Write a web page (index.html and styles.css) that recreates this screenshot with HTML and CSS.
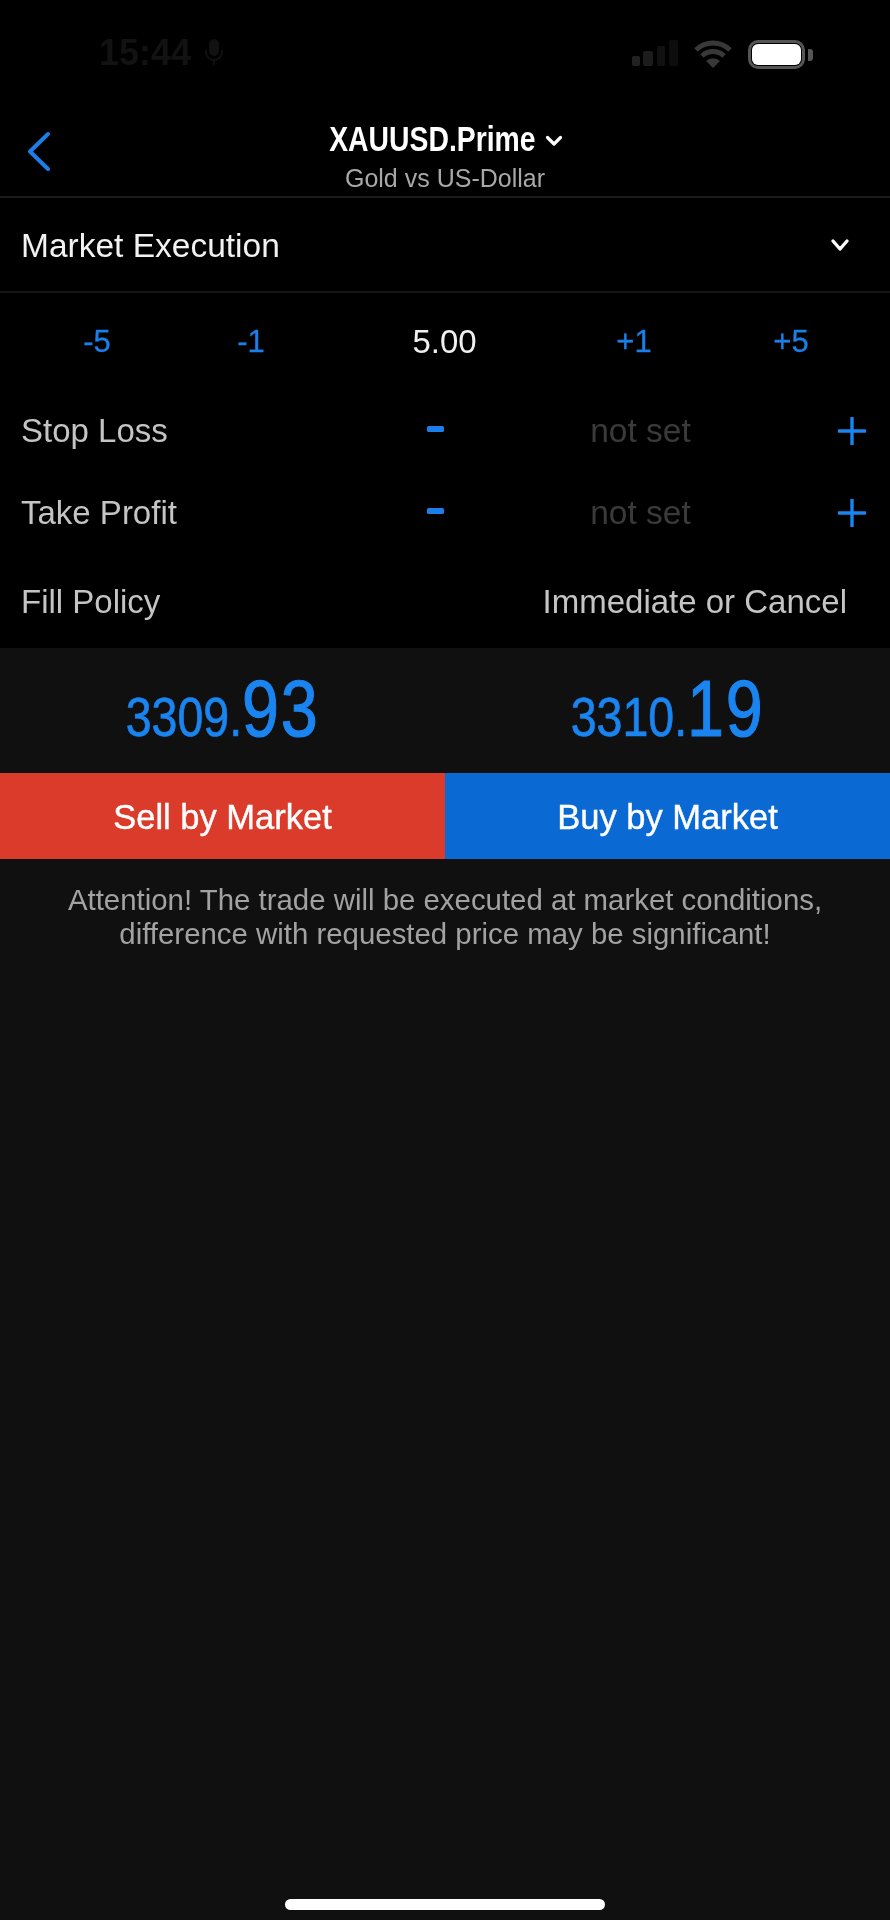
FILE: index.html
```html
<!DOCTYPE html>
<html lang="en">
<head>
<meta charset="utf-8">
<title>XAUUSD.Prime</title>
<link rel="stylesheet" href="styles.css">
</head>
<body>
<div class="screen">
  <section class="top">
    <div class="status">
      <div class="status-left">
        <span class="clock">15:44</span>
        <svg class="mic" width="20" height="28" viewBox="0 0 20 28"><rect x="5" y="1" width="10" height="17" rx="5" fill="#111"/><path d="M2 12v2a8 8 0 0 0 16 0v-2M10 22v5" stroke="#111" stroke-width="2" fill="none"/></svg>
      </div>
      <div class="status-right">
        <svg class="signal" width="46" height="26" viewBox="0 0 46 26"><rect x="0" y="16" width="8" height="10" rx="2" fill="#222"/><rect x="11" y="11" width="10" height="15" rx="2" fill="#1c1c1c"/><rect x="25" y="6" width="8" height="20" rx="2" fill="#111"/><rect x="37" y="0" width="9" height="26" rx="2" fill="#0d0d0d"/></svg>
        <svg class="wifi" width="40" height="28" viewBox="0 0 40 28"><path d="M3 10a24 24 0 0 1 34 0M9 16a16 16 0 0 1 22 0" stroke="#383838" stroke-width="5" fill="none"/><path d="M13 21a10 10 0 0 1 14 0l-7 7z" fill="#383838"/></svg>
        <span class="battery"><span class="battery-fill"></span></span>
        <span class="battery-nub"></span>
      </div>
    </div>
    <header class="nav">
      <svg class="back" width="25" height="41" viewBox="0 0 25 41"><path d="M22 3 4 20.5 22 38" stroke="#1a7fe8" stroke-width="4" fill="none" stroke-linecap="round" stroke-linejoin="round"/></svg>
      <div class="title-row">
        <span class="title">XAUUSD.Prime</span>
        <svg class="title-chev" width="18" height="12" viewBox="0 0 18 12"><path d="M2.5 2.5 9 9l6.5-6.5" stroke="#fff" stroke-width="3.2" fill="none" stroke-linecap="round" stroke-linejoin="round"/></svg>
      </div>
      <div class="subtitle">Gold vs US-Dollar</div>
    </header>
    <div class="type-row">
      <span class="type">Market Execution</span>
      <svg class="type-chev" width="20" height="14" viewBox="0 0 20 14"><path d="M3 3l7 8 7-8" stroke="#fff" stroke-width="3.4" fill="none" stroke-linecap="round" stroke-linejoin="round"/></svg>
    </div>
    <div class="volume-row">
      <span class="step">-5</span>
      <span class="step">-1</span>
      <span class="volume">5.00</span>
      <span class="step">+1</span>
      <span class="step">+5</span>
    </div>
    <div class="level-row">
      <span class="label">Stop Loss</span>
      <svg class="minus" width="17" height="6" viewBox="0 0 17 6"><rect width="17" height="6" rx="1.5" fill="#1a7fe8"/></svg>
      <span class="unset">not set</span>
      <svg width="30" height="30" viewBox="0 0 30 30"><path d="M15 1v28M1 15h28" stroke="#1a84f0" stroke-width="3.4"/></svg>
    </div>
    <div class="level-row">
      <span class="label">Take Profit</span>
      <svg class="minus" width="17" height="6" viewBox="0 0 17 6"><rect width="17" height="6" rx="1.5" fill="#1a7fe8"/></svg>
      <span class="unset">not set</span>
      <svg width="30" height="30" viewBox="0 0 30 30"><path d="M15 1v28M1 15h28" stroke="#1a84f0" stroke-width="3.4"/></svg>
    </div>
    <div class="policy-row">
      <span class="label">Fill Policy</span>
      <span class="policy">Immediate or Cancel</span>
    </div>
  </section>
  <section class="bottom">
    <div class="prices">
      <div class="price"><span class="price-small">3309.</span><span class="price-big">93</span></div>
      <div class="price"><span class="price-small">3310.</span><span class="price-big">19</span></div>
    </div>
    <div class="actions">
      <div class="action sell">Sell by Market</div>
      <div class="action buy">Buy by Market</div>
    </div>
    <p class="notice">Attention! The trade will be executed at market conditions,<br>difference with requested price may be significant!</p>
    <div class="home"></div>
  </section>
</div>
</body>
</html>
```
FILE: styles.css
```css
* { box-sizing: border-box; }
html, body { margin: 0; padding: 0; background: #101010; }
body { font-family: "Liberation Sans", Arial, sans-serif; }
.screen { width: 890px; height: 1920px; display: flex; flex-direction: column; overflow: hidden; filter: blur(0.45px); }
.top { height: 648px; background: #000; flex: none; }
.status { height: 98px; display: flex; justify-content: space-between; padding: 38px 77px 0 99px; }
.status-left { display: flex; align-items: flex-start; gap: 13px; }
.clock { font-size: 36px; line-height: 30px; font-weight: 700; color: #121212; }
.status-right { display: flex; align-items: flex-start; gap: 15px; padding-top: 2px; }
.battery { width: 57px; height: 29px; border: 3px solid #555; border-radius: 10px; padding: 1px; display: block; }
.battery-fill { display: block; width: 100%; height: 100%; background: #fff; border-radius: 6px; }
.battery-nub { width: 5px; height: 12px; background: #555; border-radius: 0 3px 3px 0; margin: 9px 0 0 -12px; }
.nav { height: 100px; position: relative; border-bottom: 2px solid #1c1c1c; display: flex; flex-direction: column; align-items: center; }
.back { position: absolute; left: 26px; top: 33px; }
.title-row { display: flex; align-items: center; gap: 9px; height: 42px; margin-left: 2px; margin-top: 20px; }
.title { display: inline-block; font-size: 35px; font-weight: 700; color: #fff; line-height: 42px; transform: scaleX(0.81); margin: 0 -24px; }
.title-chev { margin-top: 4px; }
.subtitle { font-size: 25px; line-height: 26px; color: #a8a8a8; margin-top: 5px; }
.type-row { height: 95px; border-bottom: 2px solid #161616; display: flex; align-items: center; justify-content: space-between; padding: 2px 40px 0 21px; }
.type { font-size: 33.5px; color: #f2f2f2; }
.type-chev { margin-bottom: 2px; }
.volume-row { height: 97px; padding: 0 5px 0 10px; display: grid; grid-template-columns: 174px 134px 253px 126px 188px; align-items: center; text-align: center; }
.step { font-size: 31px; color: #1a7fe8; -webkit-text-stroke: 0.3px #1a7fe8; }
.volume { font-size: 33px; color: #f0f0f0; }
.level-row { height: 82px; padding: 0 23px 0 21px; display: grid; grid-template-columns: 374px 81px 1fr 30px; align-items: center; }
.label { font-size: 33px; color: #c4c4c4; }
.minus { justify-self: center; margin-bottom: 4px; }
.unset { font-size: 33.5px; color: #3a3a3a; text-align: center; padding-right: 32px; }
.policy-row { height: 98px; display: flex; align-items: center; justify-content: space-between; padding: 0 43px 3px 21px; }
.policy { font-size: 33px; color: #c4c4c4; }
.bottom { flex: 1; background: #101010; display: flex; flex-direction: column; }
.prices { height: 125px; display: grid; grid-template-columns: 1fr 1fr; }
.price { display: flex; align-items: baseline; justify-content: center; color: #1a84f0; padding-top: 26px; line-height: 70px; transform: scaleX(0.83); }
.price-small { font-size: 56px; -webkit-text-stroke: 0.7px #1a84f0; }
.price-big { font-size: 80px; letter-spacing: 2px; -webkit-text-stroke: 1.2px #1a84f0; }
.actions { height: 86px; display: grid; grid-template-columns: 1fr 1fr; }
.action { display: flex; align-items: center; justify-content: center; font-size: 34.5px; color: #fff; padding-top: 2px; -webkit-text-stroke: 0.4px #fff; }
.sell { background: #da3b2a; }
.buy { background: #0b69d3; }
.notice { margin: 24px 0 0; font-size: 29.4px; line-height: 34px; text-align: center; color: #a2a2a2; }
.home { width: 320px; height: 11px; background: #fff; border-radius: 6px; margin: auto auto 10px; }
```
